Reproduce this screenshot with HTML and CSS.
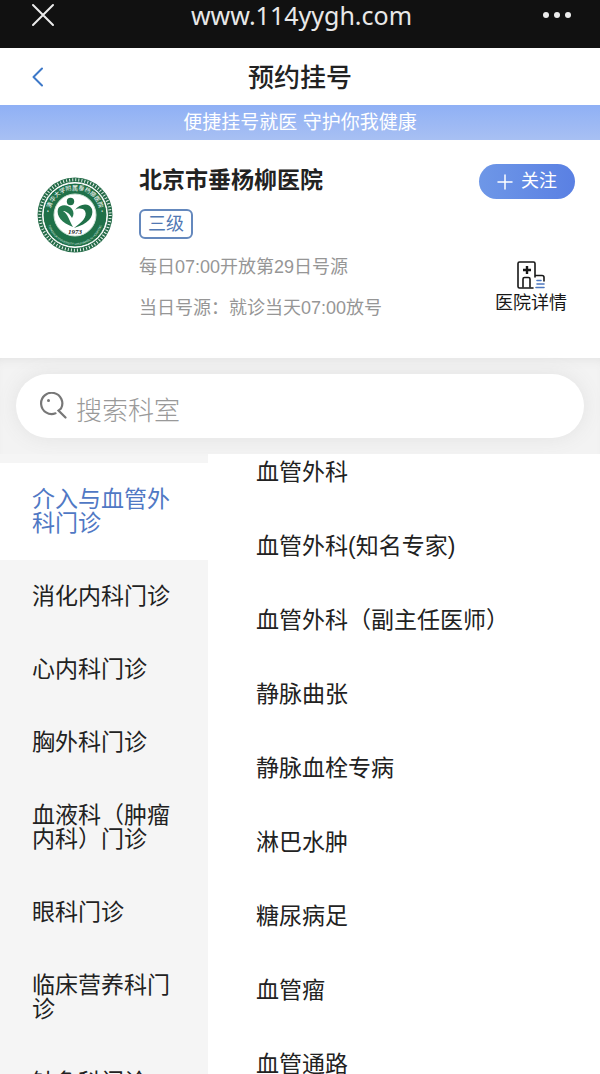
FILE: index.html
```
<!DOCTYPE html>
<html lang="zh-CN">
<head>
<meta charset="utf-8">
<meta name="viewport" content="width=device-width, initial-scale=1">
<title>预约挂号</title>
<link rel="stylesheet" href="styles.css">
</head>
<body>
<div class="browser-bar">
  <button class="icon-button" type="button" aria-label="关闭">
    <svg width="24" height="24" viewBox="0 0 24 24" fill="none" stroke="#ececec" stroke-width="2" stroke-linecap="round"><path d="M2 2l20 20M22 2L2 22"/></svg>
  </button>
  <span class="address">www.114yygh.com</span>
  <button class="icon-button" type="button" aria-label="更多">
    <svg width="30" height="8" viewBox="0 0 30 8" fill="#ececec"><circle cx="4" cy="4" r="3"/><circle cx="15" cy="4" r="3"/><circle cx="26" cy="4" r="3"/></svg>
  </button>
</div>
<header class="page-header">
  <button class="icon-button" type="button" aria-label="返回">
    <svg width="12" height="20" viewBox="0 0 12 20" fill="none" stroke="#3d78c8" stroke-width="2" stroke-linecap="round" stroke-linejoin="round"><path d="M10 1.500L1.500 10L10 18.500"/></svg>
  </button>
  <h1 class="page-title">预约挂号</h1>
</header>
<p class="banner">便捷挂号就医 守护你我健康</p>
<main class="content">
  <section class="hospital">
    <svg class="seal" viewBox="0 0 76 76" role="img" aria-label="清华大学附属垂杨柳医院">
      <defs>
        <path id="arc-top" d="M13.400 42A25 25 0 1 1 62.600 42"/>
        <path id="arc-bottom" d="M10 40A28 28 0 0 0 66 40"/>
      </defs>
      <circle cx="38" cy="38" r="35.200" fill="#fff" stroke="#246b48" stroke-width="4.500"/>
      <circle cx="38" cy="38" r="35.200" fill="none" stroke="#e9f2ec" stroke-width="3" stroke-dasharray="1 2.072"/>
      <circle cx="38" cy="38" r="32" fill="#1f7048" stroke="#fff" stroke-width="1"/>
      <circle cx="38" cy="38" r="21" fill="#fff" stroke="#cfe3d6" stroke-width="1"/>
      <text class="seal-cn"><textPath href="#arc-top" startOffset="50%">·清华大学附属垂杨柳医院·</textPath></text>
      <text class="seal-en"><textPath href="#arc-bottom" startOffset="50%">TSINGHUA UNIVERSITY CHUIYANGLIU HOSPITAL</textPath></text>
      <circle cx="33.500" cy="24.500" r="3.700" fill="#1f7048"/>
      <path d="M36 50C25 46 19 39 21 32C23 27 31 27 35 32C37 35 37 38 35 41C32 36 29 34 26 34C31 37 32 43 36 50Z" fill="#267a50"/>
      <path d="M37 51C51 47 57 40 55 32C52 25 42 27 38 33C41 31 46 31 48 34C51 40 44 46 37 51Z" fill="#1f7048"/>
      <text class="seal-year" x="38" y="57">1973</text>
    </svg>
    <div class="hospital-info">
      <h2 class="hospital-name">北京市垂杨柳医院</h2>
      <span class="level">三级</span>
      <p class="note">每日07:00开放第29日号源</p>
      <p class="note">当日号源：就诊当天07:00放号</p>
    </div>
    <div class="hospital-actions">
      <button class="follow" type="button">
        <svg width="16" height="16" viewBox="0 0 16 16" stroke="#fff" stroke-width="1.500" stroke-linecap="round"><path d="M8 1v14M1 8h14"/></svg>
        关注
      </button>
      <a class="details" href="#details">
        <svg width="28" height="28" viewBox="0 0 28 28" fill="none" stroke="#171717" stroke-width="1.600" stroke-linejoin="round" stroke-linecap="round">
          <path d="M4 27H2.500Q1 27 1 25.500V2.500Q1 1 2.500 1H16.500Q18 1 18 2.500V16M4 27H16M18 14.500H25Q27 14.500 27 16.500V20"/>
          <path d="M6 26V18Q6 16.500 7.500 16.500H11.500Q13 16.500 13 18V26"/>
          <path d="M10 5v8M6 9h8" stroke-width="2.400" stroke-linecap="butt"/>
          <path d="M20 19.500h4M20 23h7M19 26.500h8" stroke="#4c77bf"/>
        </svg>
        医院详情
      </a>
    </div>
  </section>
  <form class="search-area" role="search">
    <label class="search">
      <svg width="28" height="28" viewBox="0 0 28 28" fill="none" stroke="#777" stroke-width="2.200" stroke-linecap="round"><path d="M15.500 21.300A10.600 10.600 0 1 1 21 16.500L18.500 18.500L25.500 25.500"/><circle cx="8.500" cy="8.500" r="1.500" fill="#777" stroke="none"/></svg>
      <input class="search-input" type="search" placeholder="搜索科室" aria-label="搜索科室">
    </label>
  </form>
  <div class="departments">
    <nav class="categories" aria-label="门诊">
      <a class="category active" href="#c1" aria-current="true">介入与血管外科门诊</a>
      <a class="category" href="#c2">消化内科门诊</a>
      <a class="category" href="#c3">心内科门诊</a>
      <a class="category" href="#c4">胸外科门诊</a>
      <a class="category" href="#c5">血液科（肿瘤内科）门诊</a>
      <a class="category" href="#c6">眼科门诊</a>
      <a class="category" href="#c7">临床营养科门诊</a>
      <a class="category" href="#c8">针灸科门诊</a>
    </nav>
    <nav class="clinics" aria-label="科室">
      <a class="clinic" href="#d1">血管外科</a>
      <a class="clinic" href="#d2">血管外科(知名专家)</a>
      <a class="clinic" href="#d3">血管外科（副主任医师）</a>
      <a class="clinic" href="#d4">静脉曲张</a>
      <a class="clinic" href="#d5">静脉血栓专病</a>
      <a class="clinic" href="#d6">淋巴水肿</a>
      <a class="clinic" href="#d7">糖尿病足</a>
      <a class="clinic" href="#d8">血管瘤</a>
      <a class="clinic" href="#d9">血管通路</a>
    </nav>
  </div>
</main>
</body>
</html>
```

FILE: styles.css
```
* {
  box-sizing: border-box;
}

body {
  margin: 0;
  height: 100vh;
  overflow: hidden;
  display: flex;
  flex-direction: column;
  background: #f5f5f5;
  color: #222;
  font-family: "Liberation Sans", "Noto Sans CJK SC", sans-serif;
}

h1,
h2,
p {
  margin: 0;
}

a {
  color: inherit;
  text-decoration: none;
}

button {
  border: 0;
  font: inherit;
  cursor: pointer;
}

svg {
  display: block;
  flex: none;
}

.icon-button {
  display: flex;
  padding: 0;
  background: none;
}

.browser-bar {
  display: grid;
  grid-template-columns: 1fr auto 1fr;
  align-items: center;
  flex: none;
  padding: 0 28px 18px 31px;
  background: #111;
  color: #e8e8e8;
}

.browser-bar .icon-button:last-child {
  justify-self: end;
}

.address {
  font-family: "Noto Sans", sans-serif;
  font-size: 25px;
  line-height: 30px;
}

.page-header {
  display: grid;
  grid-template-columns: 1fr auto 1fr;
  align-items: center;
  flex: none;
  padding: 0 32px;
  background: #fff;
}

.page-title {
  padding-top: 4px;
  font-size: 26px;
  font-weight: 500;
  line-height: 53px;
}

.banner {
  flex: none;
  background: linear-gradient(#8fb0f5, #a8c0f3);
  color: #fff;
  font-size: 19px;
  line-height: 35px;
  text-align: center;
}

.content {
  display: flex;
  flex-direction: column;
  flex: 1;
  min-height: 0;
}

.hospital {
  display: flex;
  flex: none;
  padding: 24px 25px 29px 37px;
  background: #fff;
}

.seal {
  width: 76px;
  height: 76px;
  margin-top: 13px;
}

.seal-cn,
.seal-en,
.seal-year {
  text-anchor: middle;
}

.seal-cn {
  fill: #fff;
  font-family: "Noto Sans CJK SC", sans-serif;
  font-size: 6px;
}

.seal-en {
  fill: #dcebe1;
  font-size: 3px;
}

.seal-year {
  fill: #222;
  font-family: "Liberation Serif", serif;
  font-size: 7px;
  font-style: italic;
  font-weight: bold;
}

.hospital-info {
  display: flex;
  flex: 1;
  flex-direction: column;
  align-items: flex-start;
  padding-left: 26px;
}

.hospital-name {
  margin-bottom: 12px;
  font-size: 23px;
  font-weight: 700;
  line-height: 33px;
}

.level {
  margin-bottom: 8px;
  padding: 0 7px;
  border: 2px solid #6488bd;
  border-radius: 6px;
  color: #5178b3;
  font-size: 18px;
  line-height: 26px;
}

.note {
  color: #969696;
  font-size: 18px;
  line-height: 41px;
}

.hospital-actions {
  display: flex;
  flex-direction: column;
  align-items: flex-end;
  gap: 62px;
}

.follow {
  display: flex;
  align-items: center;
  gap: 8px;
  padding: 0 18px;
  border-radius: 18px;
  background: linear-gradient(90deg, #6e97e7, #5a80e3);
  color: #fff;
  font-size: 18px;
  line-height: 35px;
}

.details {
  display: flex;
  flex-direction: column;
  align-items: center;
  padding-right: 8px;
  color: #171717;
  font-size: 18px;
  line-height: 28px;
}

.search-area {
  flex: none;
  padding: 16px;
  background: #f3f3f3;
  box-shadow: inset 0 8px 12px -8px #ddd;
}

.search {
  display: flex;
  align-items: center;
  gap: 8px;
  height: 64px;
  padding: 0 24px;
  border-radius: 32px;
  background: #fff;
  box-shadow: 0 0 20px #e2e2e2;
}

.search-input {
  flex: 1;
  min-width: 0;
  padding: 4px 0 0;
  border: 0;
  outline: 0;
  background: none;
  color: #222;
  font: 300 26px "Noto Sans CJK SC", sans-serif;
}

.search-input::placeholder {
  color: #999;
  opacity: 1;
}

.departments {
  display: flex;
  flex: 1;
  min-height: 0;
  font-size: 23px;
}

.categories {
  flex: 0 0 208px;
  padding-top: 9px;
  overflow: hidden;
  line-height: 24px;
}

.category {
  display: block;
  padding: 24px 32px 25px;
}

.category.active {
  background: #fff;
  color: #5078c4;
}

.clinics {
  flex: 1;
  overflow: hidden;
  background: #fff;
}

.clinic {
  display: block;
  padding: 0 48px 38px;
  line-height: 36px;
}
```
